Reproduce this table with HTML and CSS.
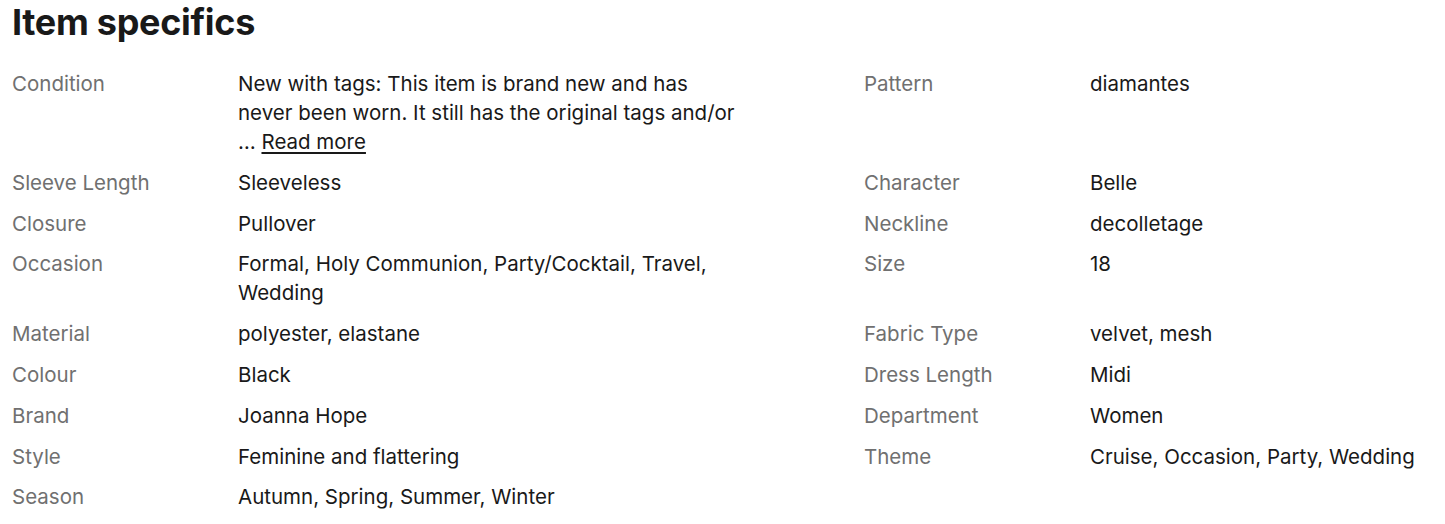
FILE: index.html
```html
<!DOCTYPE html>
<html lang="en">
<head>
<meta charset="utf-8">
<title>Item specifics</title>
<link rel="stylesheet" href="styles.css">
</head>
<body>
<section class="specs">
  <h2 class="specs-title">Item specifics</h2>
  <div class="specs-grid">
    <div class="spec"><div class="spec-label">Condition</div><div class="spec-value">New with tags: This item is brand new and has never been worn. It still has the original tags and/or<br>… <a class="read-more" href="#">Read more</a></div></div>
    <div class="spec"><div class="spec-label">Pattern</div><div class="spec-value">diamantes</div></div>
    <div class="spec"><div class="spec-label">Sleeve Length</div><div class="spec-value">Sleeveless</div></div>
    <div class="spec"><div class="spec-label">Character</div><div class="spec-value">Belle</div></div>
    <div class="spec"><div class="spec-label">Closure</div><div class="spec-value">Pullover</div></div>
    <div class="spec"><div class="spec-label">Neckline</div><div class="spec-value">decolletage</div></div>
    <div class="spec"><div class="spec-label">Occasion</div><div class="spec-value">Formal, Holy Communion, Party/Cocktail, Travel, Wedding</div></div>
    <div class="spec"><div class="spec-label">Size</div><div class="spec-value">18</div></div>
    <div class="spec"><div class="spec-label">Material</div><div class="spec-value">polyester, elastane</div></div>
    <div class="spec"><div class="spec-label">Fabric Type</div><div class="spec-value">velvet, mesh</div></div>
    <div class="spec"><div class="spec-label">Colour</div><div class="spec-value">Black</div></div>
    <div class="spec"><div class="spec-label">Dress Length</div><div class="spec-value">Midi</div></div>
    <div class="spec"><div class="spec-label">Brand</div><div class="spec-value">Joanna Hope</div></div>
    <div class="spec"><div class="spec-label">Department</div><div class="spec-value">Women</div></div>
    <div class="spec"><div class="spec-label">Style</div><div class="spec-value">Feminine and flattering</div></div>
    <div class="spec"><div class="spec-label">Theme</div><div class="spec-value">Cruise, Occasion, Party, Wedding</div></div>
    <div class="spec"><div class="spec-label">Season</div><div class="spec-value">Autumn, Spring, Summer, Winter</div></div>
  </div>
</section>
</body>
</html>
```
FILE: styles.css
```css
html, body {
  margin: 0;
  padding: 0;
  background: #ffffff;
}
body {
  font-family: Inter, "Liberation Sans", sans-serif;
  color: #191919;
}
.specs {
  padding: 0 12px;
}
.specs-title {
  margin: 0;
  font-size: 36px;
  line-height: 44px;
  font-weight: 700;
  letter-spacing: -0.3px;
  color: #191919;
}
.specs-grid {
  margin-top: 25px;
  display: grid;
  grid-template-columns: 852px minmax(0, 1fr);
  row-gap: 11.8px;
}
.spec {
  display: grid;
  grid-template-columns: 226px minmax(0, 500px);
  font-size: 20.5px;
  line-height: 29px;
}
.spec-label {
  color: #707070;
}
.spec-value {
  color: #191919;
}
.read-more {
  color: #191919;
  text-decoration: underline;
  text-underline-offset: 3px;
}
```
